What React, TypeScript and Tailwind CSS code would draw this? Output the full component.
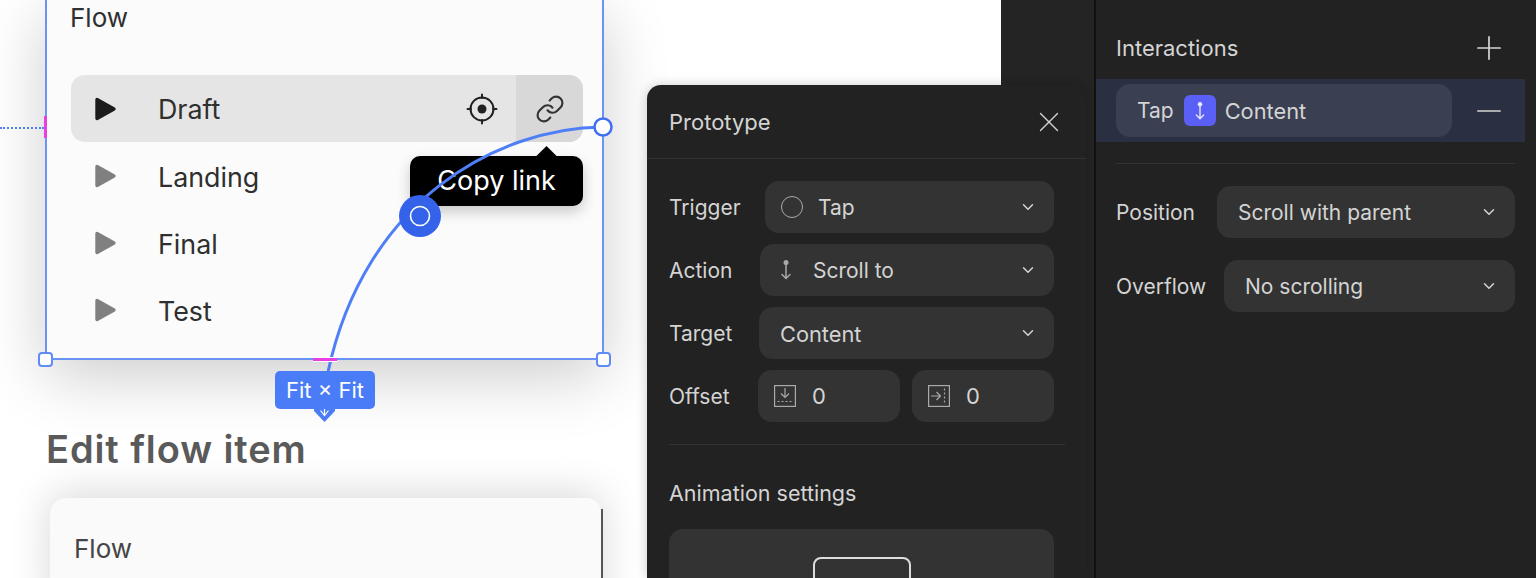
import { ChevronDown, Link, Minus, Plus, X } from "lucide-react"

const font = { fontFamily: "Inter, 'Noto Sans', sans-serif" }

function Play({ dark }: { dark?: boolean }) {
  const color = dark ? "#1c1c1c" : "#808080"
  return (
    <svg width="24" height="26" viewBox="0 0 24 26" className="shrink-0">
      <path d="M3 3.5 L20 13 L3 22.5 Z" fill={color} stroke={color} strokeWidth="3.4" strokeLinejoin="round" />
    </svg>
  )
}

function ScrollIcon({ color, size = 22 }: { color: string; size?: number }) {
  return (
    <svg width={size} height={size} viewBox="0 0 22 22" fill="none" stroke={color} strokeWidth="1.5" strokeLinecap="round" strokeLinejoin="round">
      <circle cx="11" cy="3.5" r="2.5" fill={color} stroke="none" />
      <path d="M11 5v14M7 15.5l4 4 4-4" />
    </svg>
  )
}

function TargetIcon() {
  return (
    <svg width="32" height="32" viewBox="0 0 32 32" fill="none" stroke="#222" strokeWidth="2" strokeLinecap="round" className="mr-[18px]">
      <circle cx="16" cy="16" r="11.5" />
      <circle cx="16" cy="16" r="4.5" fill="#222" stroke="none" />
      <path d="M16 1.5v3.5M16 27v3.5M1.5 16h3.5M27 16h3.5" />
    </svg>
  )
}

function FlowRow({ label, active }: { label: string; active?: boolean }) {
  return (
    <div className={`flex h-[67px] items-center rounded-[14px] pl-[23px] ${active ? "bg-[#e5e5e5]" : ""}`}>
      <Play dark={active} />
      <span className={`ml-[40px] text-[26.8px] text-[#2f2f2f] ${active ? "pt-[1px]" : "pt-[3px]"}`}>{label}</span>
      {active && (
        <div className="ml-auto flex h-full items-center">
          <TargetIcon />
          <div className="flex h-full w-[67px] items-center justify-center rounded-r-[14px] bg-[#d8d8d8]">
            <Link size={30} strokeWidth={1.7} className="text-[#333]" />
          </div>
        </div>
      )}
    </div>
  )
}

function Field({ label, labelClass, text, icon, textClass }: { label: string; labelClass: string; text: string; icon?: React.ReactNode; textClass?: string }) {
  return (
    <div className="flex items-center">
      <span className={`pt-[2px] text-[21px] text-[#d4d4d4] ${labelClass}`}>{label}</span>
      <div className={`flex h-[52px] flex-1 items-center rounded-[14px] bg-[#333333] pr-[17px] text-[#d4d4d4] ${icon ? "pl-[15px]" : "pl-[21px]"}`}>
        {icon}
        <span className={`pt-[2px] ${textClass ?? "text-[21px]"}`}>{text}</span>
        <ChevronDown size={18} strokeWidth={2} className="ml-auto text-[#d4d4d4]" />
      </div>
    </div>
  )
}

function OffsetInput({ icon }: { icon: React.ReactNode }) {
  return (
    <div className="flex h-[52px] flex-1 items-center gap-[16px] rounded-[14px] bg-[#333333] pl-[16px] text-[22px] text-[#d4d4d4]">
      {icon}
      <span className="pt-[1px]">0</span>
    </div>
  )
}

export default function App() {
  return (
    <div className="relative flex h-[578px] w-[1536px] overflow-hidden bg-[#232323]" style={font}>
      {/* canvas */}
      <div className="relative h-full w-[1001px] shrink-0 overflow-hidden bg-white">
        <div className="ml-[45px] h-[360px] w-[559px] border-x-2 border-b-2 border-[#6a93f8] bg-[#fbfbfb] pl-[24px] pr-[19px] pt-[2px] shadow-[0_16px_60px_rgba(0,0,0,0.2)]">
          <div className="-ml-[1px] text-[26px] leading-[32px] text-[#2f2f2f]">Flow</div>
          <div className="mt-[41px]">
            <FlowRow label="Draft" active />
            <FlowRow label="Landing" />
            <FlowRow label="Final" />
            <FlowRow label="Test" />
          </div>
        </div>

        <h1 className="ml-[46px] mt-[67px] text-[38px] font-semibold leading-[44px] tracking-[0.9px] text-[#5a5a5a]">Edit flow item</h1>

        <div className="ml-[50px] mt-[27px] h-[120px] w-[552px] rounded-t-[16px] bg-[#fafafa] pl-[24px] pt-[35px] shadow-[0_-4px_40px_rgba(0,0,0,0.16)]">
          <div className="text-[26px] leading-[32px] text-[#444]">Flow</div>
        </div>
        <div className="absolute left-[601px] top-[509px] h-[69px] w-[2px] bg-[#555]" />

        {/* dotted guide */}
        <div className="absolute left-0 top-[127px] w-[44px] border-t-2 border-dotted border-[#4f7ff6]" />
        <div className="absolute left-[44px] top-[116px] h-[22px] w-[3px] bg-[#e83fe0]" />

        {/* tooltip */}
        <div className="absolute left-[410px] top-[156px] flex h-[50px] w-[173px] items-center justify-center rounded-[10px] bg-black pt-[1px] text-[27px] text-white shadow-[0_6px_14px_rgba(0,0,0,0.2)]">
          <span className="absolute left-[129px] top-[-7px] h-[15px] w-[15px] rotate-45 bg-black" />
          <span className="relative">Copy link</span>
        </div>

        {/* connection curve */}
        <svg className="absolute left-0 top-0" width="1001" height="578" fill="none">
          <path d="M603 127 C497 128 365 200 328 372" stroke="#4f7ff6" strokeWidth="3" />
          <circle cx="603" cy="127" r="8.5" fill="#fff" stroke="#3f6ff0" strokeWidth="2.5" />
          <circle cx="420" cy="216" r="21" fill="#3463ea" />
          <circle cx="420" cy="216" r="9.5" fill="none" stroke="#fff" strokeWidth="1.6" />
        </svg>

        {/* bottom tick sits over the curve */}
        <div className="absolute left-[313px] top-[357px] h-[5px] w-[24px] border-y border-white bg-[#e83fe0]" />

        {/* corner handles */}
        <div className="absolute left-[38px] top-[352px] h-[15px] w-[15px] rounded-[4px] border-2 border-[#5f8bf7] bg-white" />
        <div className="absolute left-[596px] top-[352px] h-[15px] w-[15px] rounded-[4px] border-2 border-[#5f8bf7] bg-white" />

        {/* size badge */}
        <svg className="absolute left-[313px] top-[404px]" width="23" height="18" viewBox="0 0 23 18" fill="none">
          <path d="M1 0h21v7L11.5 18 1 7z" fill="#4a7cf7" />
          <path d="M11.5 5v6.5M7.5 6.5l4 5 4-5" stroke="#fff" strokeWidth="1.2" />
        </svg>
        <div className="absolute left-[275px] top-[371px] flex h-[38px] w-[100px] items-center justify-center rounded-[5px] bg-[#4a7cf7] text-[22px] text-white">
          Fit × Fit
        </div>
      </div>

      {/* strip beside the canvas */}
      <div className="h-full w-[95px] shrink-0 border-r-[2px] border-[#121212] bg-[#242424]" />

      {/* right panel */}
      <div className="relative flex-1 bg-[#222222] text-[22px] text-[#d4d4d4]">
        <div className="flex h-[79px] items-center justify-between pl-[20px] pr-[28px] pt-[17px]">
          <span>Interactions</span>
          <Plus size={38} strokeWidth={1.1} />
        </div>
        <div className="flex h-[63px] w-[429px] items-center bg-[#2a3042] pl-[20px]">
          <div className="flex h-[53px] w-[336px] items-center rounded-[14px] bg-[#3a3f52] pl-[21px]">
            <span className="pt-[1px] text-[21px]">Tap</span>
            <div className="ml-[10px] flex h-[31px] w-[32px] items-center justify-center rounded-[6px] bg-[#5a5ff5]">
              <ScrollIcon color="#e8e8ff" size={20} />
            </div>
            <span className="ml-[9px] pt-[1px] text-[21.8px]">Content</span>
          </div>
          <Minus size={38} strokeWidth={1.1} className="ml-auto mr-[17px]" />
        </div>
        <div className="ml-[20px] mr-[21px] mt-[21px] border-t border-[#333]" />
        <div className="ml-[20px] mr-[21px] mt-[22px] flex flex-col gap-[22px]">
          <Field label="Position" labelClass="w-[101px]" text="Scroll with parent" />
          <Field label="Overflow" labelClass="w-[108px]" text="No scrolling" />
        </div>
      </div>

      {/* prototype popover */}
      <div className="absolute left-[647px] top-[85px] h-[493px] w-[439px] overflow-hidden rounded-t-[14px] bg-[#222222] text-[22px] text-[#d4d4d4] shadow-[0_0_12px_rgba(0,0,0,0.2)]">
        <div className="flex h-[74px] items-center justify-between border-b border-[#333] pl-[22px] pr-[20px]">
          <span className="pt-[2px]">Prototype</span>
          <X size={34} strokeWidth={0.95} />
        </div>
        <div className="flex flex-col gap-[11px] pl-[22px] pr-[32px] pt-[22px]">
          <Field
            label="Trigger"
            labelClass="w-[96px]"
            text="Tap"
            icon={<span className="ml-[1px] mr-[15px] h-[22px] w-[22px] rounded-full border-[1.5px] border-[#aaa]" />}
          />
          <Field label="Action" labelClass="w-[91px]" text="Scroll to" icon={<span className="mr-[16px]"><ScrollIcon color="#aaa" /></span>} />
          <Field label="Target" labelClass="w-[90px]" text="Content" textClass="text-[21.8px]" />
          <div className="flex items-center">
            <span className="w-[89px] pt-[2px] text-[21px]">Offset</span>
            <div className="flex flex-1 gap-[12px]">
              <OffsetInput
                icon={
                  <svg width="22" height="22" viewBox="0 0 22 22" fill="none" stroke="#aaa" strokeWidth="1.2">
                    <rect x="0.6" y="0.6" width="20.8" height="20.8" />
                    <path d="M11 3v9M7 8.5l4 4 4-4" />
                    <path d="M3.5 16.5h15" strokeDasharray="2 2" />
                  </svg>
                }
              />
              <OffsetInput
                icon={
                  <svg width="22" height="22" viewBox="0 0 22 22" fill="none" stroke="#aaa" strokeWidth="1.2">
                    <rect x="0.6" y="0.6" width="20.8" height="20.8" />
                    <path d="M3 11h9M8.5 7l4 4-4 4" />
                    <path d="M16.5 3.5v15" strokeDasharray="2 2" />
                  </svg>
                }
              />
            </div>
          </div>
        </div>
        <div className="ml-[22px] mr-[21px] mt-[22px] border-t border-[#333]" />
        <div className="ml-[22px] mt-[34px] text-[21.5px] leading-[28px]">Animation settings</div>
        <div className="ml-[22px] mr-[32px] mt-[22px] h-[120px] rounded-[14px] bg-[#333333] pt-[28px]">
          <div className="mx-auto h-[80px] w-[98px] rounded-[8px] border-2 border-[#ddd]" />
        </div>
      </div>
    </div>
  )
}
